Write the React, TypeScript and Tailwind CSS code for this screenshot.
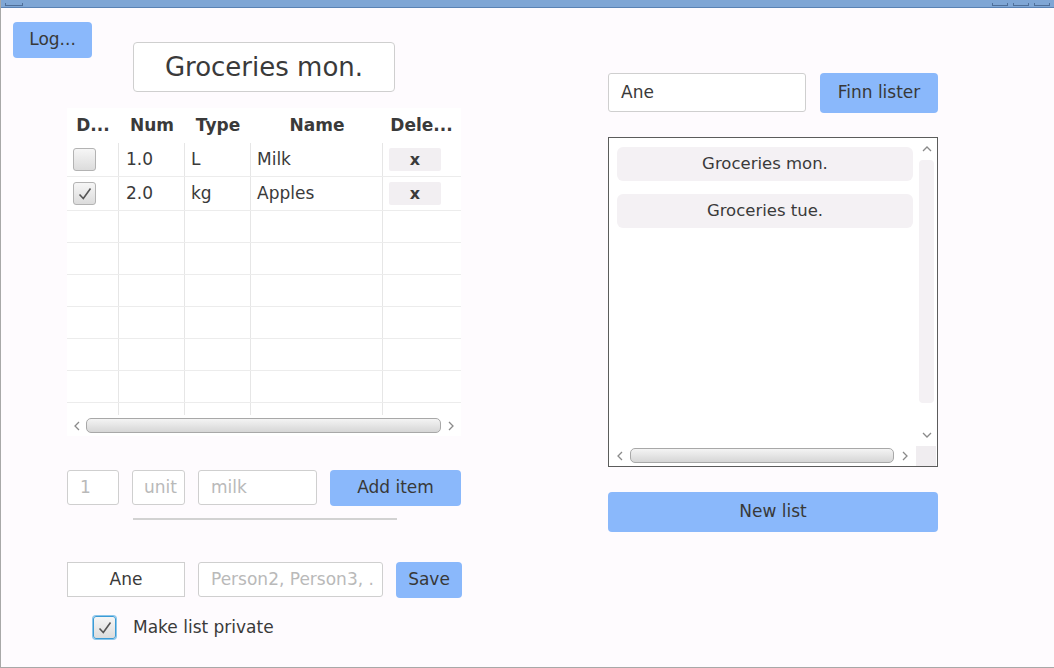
import React from "react";

const items = [
  { done: false, num: "1.0", type: "L", name: "Milk" },
  { done: true, num: "2.0", type: "kg", name: "Apples" },
];

const cols = "grid grid-cols-[52px_66px_66px_132px_77px]";

function Check({ on, ring }: { on?: boolean; ring?: boolean }) {
  return (
    <div
      className={
        "w-[23px] h-[23px] rounded-[3px] border bg-gradient-to-b from-[#f6f6f6] to-[#dcdcdc] flex items-center justify-center " +
        (ring ? "border-[#3b9bd6] ring-1 ring-[#8cc6ea]" : "border-[#b3b3b3]")
      }
    >
      {on && (
        <svg width="16" height="16" viewBox="0 0 16 16">
          <path d="M2.5 8.5 L6.3 12.5 L13.5 2.5" fill="none" stroke="#555" strokeWidth="1.6" />
        </svg>
      )}
    </div>
  );
}

function Chevron({ dir }: { dir: "left" | "right" | "up" | "down" }) {
  const d = {
    left: "M6 1 L2 5 L6 9",
    right: "M2 1 L6 5 L2 9",
    up: "M1 6 L5 2 L9 6",
    down: "M1 2 L5 6 L9 2",
  }[dir];
  const w = dir === "left" || dir === "right" ? 8 : 10;
  const h = dir === "left" || dir === "right" ? 10 : 8;
  return (
    <svg width={w} height={h} viewBox={`0 0 ${w} ${h}`}>
      <path d={d} fill="none" stroke="#8a8a8a" strokeWidth="1.3" />
    </svg>
  );
}

function Thumb() {
  return (
    <div className="h-[15px] flex-1 rounded-[5px] border border-[#a8a8a8] bg-gradient-to-b from-[#f4f4f4] to-[#d6d6d6]" />
  );
}

function Btn({ children, className }: { children: React.ReactNode; className: string }) {
  return (
    <div
      className={
        "bg-[#8ab8fb] rounded-[4px] flex items-center justify-center text-[17px] text-[#383838] " + className
      }
    >
      {children}
    </div>
  );
}

function Field({ children, className }: { children?: React.ReactNode; className: string }) {
  return (
    <div
      className={
        "bg-white border border-[#cfcfcf] rounded-[3px] flex items-center text-[17px] " + className
      }
    >
      {children}
    </div>
  );
}

export default function App() {
  return (
    <div className="w-[1054px] h-[668px] bg-[#fefbfe] border-l border-[#a8a8a8] flex flex-col text-[#3a3a3a] font-['DejaVu_Sans',sans-serif] overflow-hidden">
      {/* title bar, mostly off screen */}
      <div className="h-[8px] shrink-0 bg-[#7fa6d5] border-b border-[#5a82b4] flex items-end justify-between px-[4px]">
        <div className="w-[18px] h-[3px] border border-t-0 border-[#4f6f99] mb-[1px]" />
        <div className="flex gap-[5px] mb-[1px]">
          <div className="w-[16px] h-[3px] border border-t-0 border-[#4f6f99]" />
          <div className="w-[16px] h-[3px] border border-t-0 border-[#4f6f99]" />
          <div className="w-[16px] h-[3px] border border-t-0 border-[#4f6f99]" />
        </div>
      </div>

      <div className="flex flex-1 min-h-0 border-b border-[#a8a8a8]">
        {/* left column */}
        <div className="w-[461px] flex flex-col">
          <div className="flex items-start">
            <Btn className="ml-[12px] mt-[14px] w-[79px] h-[36px]">Log...</Btn>
            <div className="ml-[41px] mt-[34px] w-[262px] h-[50px] bg-white border border-[#cfcfcf] rounded-[4px] flex items-center justify-center text-[26px]">
              Groceries mon.
            </div>
          </div>

          {/* table */}
          <div className="ml-[66px] mt-[16px] w-[394px] bg-white">
            <div className={cols + " h-[35px] items-center font-bold text-[17px] text-center"}>
              <div>D...</div>
              <div>Num</div>
              <div>Type</div>
              <div>Name</div>
              <div>Dele...</div>
            </div>
            {items.map((it) => (
              <div key={it.name} className={cols + " h-[34px] border-b border-[#ececec] text-[17px]"}>
                <div className="border-r border-[#e6e6e6] flex items-center pl-[6px]">
                  <Check on={it.done} />
                </div>
                <div className="border-r border-[#e6e6e6] flex items-center pl-[7px]">{it.num}</div>
                <div className="border-r border-[#e6e6e6] flex items-center pl-[6px]">{it.type}</div>
                <div className="border-r border-[#e6e6e6] flex items-center pl-[6px]">{it.name}</div>
                <div className="flex items-center pl-[6px]">
                  <div className="w-[52px] h-[23px] bg-[#f2eff2] rounded-[2px] flex items-center justify-center font-bold text-[16px]">
                    x
                  </div>
                </div>
              </div>
            ))}
            {[0, 1, 2, 3, 4, 5].map((i) => (
              <div key={i} className={cols + " h-[32px] border-b border-[#ececec]"}>
                <div className="border-r border-[#e6e6e6]" />
                <div className="border-r border-[#e6e6e6]" />
                <div className="border-r border-[#e6e6e6]" />
                <div className="border-r border-[#e6e6e6]" />
                <div />
              </div>
            ))}
            <div className={cols + " h-[12px]"}>
              <div className="border-r border-[#e6e6e6]" />
              <div className="border-r border-[#e6e6e6]" />
              <div className="border-r border-[#e6e6e6]" />
              <div className="border-r border-[#e6e6e6]" />
              <div />
            </div>
            <div className="h-[21px] flex items-center">
              <div className="w-[19px] flex justify-center">
                <Chevron dir="left" />
              </div>
              <Thumb />
              <div className="w-[20px] flex justify-center">
                <Chevron dir="right" />
              </div>
            </div>
          </div>

          {/* add item row */}
          <div className="flex items-start mt-[34px] ml-[66px]">
            <Field className="w-[52px] h-[35px] pl-[12px] text-[#b9b9b9]">1</Field>
            <Field className="ml-[13px] w-[53px] h-[35px] pl-[11px] text-[#b9b9b9]">unit</Field>
            <Field className="ml-[13px] w-[119px] h-[35px] pl-[12px] text-[#b9b9b9]">milk</Field>
            <Btn className="ml-[13px] w-[131px] h-[36px]">Add item</Btn>
          </div>
          <div className="mt-[12px] ml-[132px] w-[264px] h-[2px] bg-[#d2d2d2]" />

          {/* share row */}
          <div className="flex items-start mt-[42px] ml-[66px]">
            <div className="w-[118px] h-[35px] bg-white border border-[#cfcfcf] flex items-center justify-center text-[17px]">
              Ane
            </div>
            <Field className="ml-[13px] w-[185px] h-[35px] pl-[12px] text-[#b9b9b9] whitespace-nowrap overflow-hidden">
              Person2, Person3, .
            </Field>
            <Btn className="ml-[13px] w-[66px] h-[36px]">Save</Btn>
          </div>
          <div className="flex items-center mt-[17px] ml-[92px]">
            <Check on ring />
            <span className="ml-[17px] text-[17px]">Make list private</span>
          </div>
        </div>

        {/* right column */}
        <div className="ml-[146px] w-[330px] flex flex-col">
          <div className="flex items-start mt-[65px]">
            <Field className="w-[198px] h-[39px] pl-[12px]">Ane</Field>
            <Btn className="ml-[14px] w-[118px] h-[40px]">Finn lister</Btn>
          </div>

          <div className="mt-[24px] w-[330px] h-[330px] bg-white border border-[#5c5c5c] flex flex-col">
            <div className="flex flex-1">
              <div className="flex-1 pl-[8px] pt-[9px] pr-[3px] flex flex-col gap-[13px]">
                {["Groceries mon.", "Groceries tue."].map((n) => (
                  <div key={n} className="h-[34px] bg-[#f4f1f4] rounded-[6px] flex items-center justify-center text-[16.5px]">
                    {n}
                  </div>
                ))}
              </div>
              <div className="w-[21px] flex flex-col items-center">
                <div className="h-[22px] flex items-center">
                  <Chevron dir="up" />
                </div>
                <div className="w-[15px] h-[243px] bg-[#f4f1f4] rounded-[4px]" />
                <div className="flex-1 flex items-end pb-[6px]">
                  <Chevron dir="down" />
                </div>
              </div>
            </div>
            <div className="h-[21px] flex items-center">
              <div className="w-[21px] flex justify-center">
                <Chevron dir="left" />
              </div>
              <Thumb />
              <div className="w-[22px] flex justify-center">
                <Chevron dir="right" />
              </div>
              <div className="w-[20px] h-[20px] bg-[#f0edf0] mr-[1px]" />
            </div>
          </div>

          <Btn className="mt-[25px] w-[330px] h-[40px]">New list</Btn>
        </div>
      </div>
    </div>
  );
}
